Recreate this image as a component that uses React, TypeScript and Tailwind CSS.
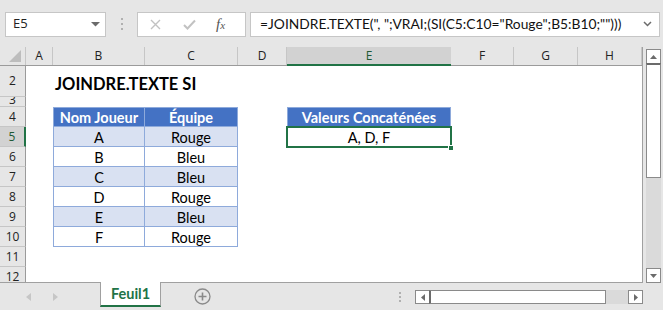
import React from "react";

const FONT_UI = { fontFamily: '"Open Sans", "Noto Sans", sans-serif' };
const FONT_CELL = { fontFamily: 'Lato, "Noto Sans", sans-serif' };

const colW = ["w-[27px]", "w-[92px]", "w-[93px]", "w-[49px]", "w-[164px]", "w-[63px]", "w-[64px]", "w-[64px]"];
const colK = ["A", "B", "C", "D", "E", "F", "G", "H"];

const data: [string, string][] = [
  ["A", "Rouge"],
  ["B", "Bleu"],
  ["C", "Bleu"],
  ["D", "Rouge"],
  ["E", "Bleu"],
  ["F", "Rouge"],
];

function RowHeader({ n, h, sel }: { n: string; h: string; sel?: boolean }) {
  return (
    <div
      className={`${h} w-[26px] shrink-0 flex items-center justify-center text-[12px] border-b border-[#c6c6c6] ${
        sel ? "bg-[#d2d2d2] border-r-2 border-r-[#217346] text-[#1e5a35]" : "bg-[#e6e6e6] border-r border-r-[#9b9b9b] text-[#222]"
      } overflow-hidden leading-none`}
      style={FONT_UI}
    >
      {n}
    </div>
  );
}

function EmptyCells({ from, to, h }: { from: number; to: number; h: string }) {
  return (
    <>
      {colW.slice(from, to).map((w, i) => (
        <div key={i} className={`${w} ${h} shrink-0 bg-white`} />
      ))}
    </>
  );
}

export default function App() {
  return (
    <div className="w-[663px] h-[310px] overflow-hidden bg-[#e6e6e6] flex flex-col select-none">
      {/* Formula bar */}
      <div className="h-[47px] shrink-0 flex items-center bg-[#e6e6e6] pt-[1px]">
        <div className="ml-[5px] w-[101px] h-[25px] bg-white border border-[#c6c6c6] flex items-center justify-between pl-[7px] pr-[5px]">
          <span className="text-[13px] text-[#222]" style={FONT_UI}>E5</span>
          <svg width="9" height="5" viewBox="0 0 9 5"><path d="M0 0 L9 0 L4.5 4.5 Z" fill="#6b6b6b" /></svg>
        </div>
        <div className="w-[31px] h-[25px] flex flex-col items-center justify-center gap-[3px]">
          <div className="w-[2px] h-[2px] bg-[#b0b0b0]" />
          <div className="w-[2px] h-[2px] bg-[#b0b0b0]" />
          <div className="w-[2px] h-[2px] bg-[#b0b0b0]" />
        </div>
        <div className="w-[109px] h-[25px] bg-white border border-[#c6c6c6] flex items-center">
          <svg className="ml-[12px]" width="11" height="11" viewBox="0 0 11 11">
            <path d="M1 1 L10 10 M10 1 L1 10" stroke="#c2c2c2" strokeWidth="1.4" />
          </svg>
          <svg className="ml-[22px]" width="13" height="11" viewBox="0 0 13 11">
            <path d="M1 6 L4.5 9.5 L12 1.5" stroke="#c2c2c2" strokeWidth="2" fill="none" />
          </svg>
          <span
            className="ml-[20px] text-[15px] italic text-[#555] leading-none"
            style={{ fontFamily: '"Liberation Serif", serif' }}
          >
            f<span className="text-[11px]">x</span>
          </span>
        </div>
        <div className="ml-[4px] w-[410px] h-[25px] bg-white border border-[#c6c6c6] flex items-center justify-between pl-[9px] pr-[7px]">
          <span className="text-[13.8px] text-[#111] whitespace-nowrap" style={FONT_CELL}>
            =JOINDRE.TEXTE(", ";VRAI;(SI(C5:C10="Rouge";B5:B10;"")))
          </span>
          <svg width="9" height="6" viewBox="0 0 9 6"><path d="M1 1 L4.5 4.5 L8 1" stroke="#6b6b6b" strokeWidth="1.5" fill="none" /></svg>
        </div>
      </div>

      {/* Grid + vertical scrollbar */}
      <div className="h-[236px] shrink-0 flex">
        <div className="w-[643px] flex flex-col border-r border-[#a0a0a0] border-b border-b-[#a0a0a0]">
          {/* column headers */}
          <div className="h-[19px] shrink-0 flex border-b border-[#9b9b9b]">
            <div className="w-[26px] h-full shrink-0 flex items-end justify-end pr-[4px] pb-[3px] border-r border-[#c6c6c6]">
              <svg width="12" height="12" viewBox="0 0 12 12"><path d="M12 0 L12 12 L0 12 Z" fill="#bdbdbd" /></svg>
            </div>
            {colK.map((k, i) => (
              <div
                key={k}
                className={`${colW[i]} shrink-0 flex items-center justify-center text-[12px] ${
                  k === "E"
                    ? "bg-[#d2d2d2] border-b-2 border-[#217346] text-[#1e5a35] -mb-[1px]"
                    : "border-r border-[#c6c6c6] text-[#222]"
                }`}
                style={FONT_UI}
              >
                {k}
              </div>
            ))}
          </div>

          {/* Row 2 */}
          <div className="h-[31px] shrink-0 flex">
            <RowHeader n="2" h="h-[31px]" />
            <div className="w-[27px] shrink-0 bg-white" />
            <div className="flex-1 bg-white flex items-center pl-[2px] pt-[5px]">
              <span className="text-[16.5px] font-bold text-black" style={FONT_CELL}>JOINDRE.TEXTE SI</span>
            </div>
          </div>

          {/* Row 3 */}
          <div className="h-[10px] shrink-0 flex">
            <div className="h-[10px] w-[26px] shrink-0 bg-[#e6e6e6] border-r border-[#9b9b9b] border-b border-b-[#c6c6c6] overflow-hidden flex justify-center">
              <span className="text-[12px] text-[#222] leading-none -mt-[3px]" style={FONT_UI}>3</span>
            </div>
            <div className="flex-1 bg-white" />
          </div>

          {/* Row 4 */}
          <div className="h-[20px] shrink-0 flex" style={FONT_CELL}>
            <RowHeader n="4" h="h-[20px]" />
            <EmptyCells from={0} to={1} h="h-[20px]" />
            <div className="w-[92px] h-[20px] shrink-0 bg-[#4472c4] border border-[#8eaadb] flex items-center justify-center pt-[2px] text-white font-bold text-[14.5px]">
              Nom Joueur
            </div>
            <div className="w-[93px] h-[20px] shrink-0 bg-[#4472c4] border border-l-0 border-[#8eaadb] flex items-center justify-center pt-[2px] text-white font-bold text-[14.5px]">
              Équipe
            </div>
            <EmptyCells from={3} to={4} h="h-[20px]" />
            <div className="w-[164px] h-[20px] shrink-0 bg-[#4472c4] border border-[#8eaadb] flex items-center justify-center pt-[2px] text-white font-bold text-[14.5px]">
              Valeurs Concaténées
            </div>
            <EmptyCells from={5} to={8} h="h-[20px]" />
          </div>

          {/* Rows 5-10 */}
          {data.map(([n, t], i) => {
            const band = i % 2 === 0 ? "bg-[#d9e1f2]" : "bg-white";
            return (
              <div key={n} className="h-[20px] shrink-0 flex" style={FONT_CELL}>
                <RowHeader n={String(i + 5)} h="h-[20px]" sel={i === 0} />
                <EmptyCells from={0} to={1} h="h-[20px]" />
                <div className={`w-[92px] h-[20px] shrink-0 ${band} border-l border-r border-b border-[#8eaadb] flex items-center justify-center pt-[2px] text-black text-[14.5px]`}>
                  {n}
                </div>
                <div className={`w-[93px] h-[20px] shrink-0 ${band} border-r border-b border-[#8eaadb] flex items-center justify-center pt-[2px] text-black text-[14.5px]`}>
                  {t}
                </div>
                <EmptyCells from={3} to={4} h="h-[20px]" />
                {i === 0 ? (
                  <div className="w-[164px] h-[20px] shrink-0 bg-white relative flex items-center justify-center pt-[2px] text-black text-[14.5px]">
                    A, D, F
                    <div className="absolute -left-[1px] -top-[1px] w-[166px] h-[22px] border-2 border-[#217346]" />
                    <div className="absolute -right-[3px] -bottom-[4px] w-[6px] h-[6px] bg-[#217346] border border-white" />
                  </div>
                ) : (
                  <EmptyCells from={4} to={5} h="h-[20px]" />
                )}
                <EmptyCells from={5} to={8} h="h-[20px]" />
              </div>
            );
          })}

          {/* Row 11 */}
          <div className="h-[20px] shrink-0 flex">
            <RowHeader n="11" h="h-[20px]" />
            <div className="flex-1 bg-white" />
          </div>
          {/* Row 12 */}
          <div className="flex-1 flex overflow-hidden">
            <div className="w-[26px] shrink-0 bg-[#e6e6e6] border-r border-[#9b9b9b] flex justify-center pt-[4px] text-[12px] text-[#222] leading-none" style={FONT_UI}>
              12
            </div>
            <div className="flex-1 bg-white" />
          </div>
        </div>

        {/* Vertical scrollbar */}
        <div className="w-[20px] flex flex-col pl-[3px] pr-[2px] pt-[2px]">
          <div className="h-[15px] w-[15px] bg-white border border-[#8a8a8a] flex items-center justify-center">
            <svg width="7" height="4" viewBox="0 0 7 4"><path d="M0 4 L3.5 0 L7 4 Z" fill="#6b6b6b" /></svg>
          </div>
          <div className="h-[115px] w-[15px] bg-white border border-[#8a8a8a] border-t-2 border-t-[#6b6b6b] -mt-[1px]" />
          <div className="flex-1 w-[15px] bg-[#dadada]" />
          <div className="h-[15px] w-[15px] bg-white border border-[#8a8a8a] flex items-center justify-center">
            <svg width="7" height="4" viewBox="0 0 7 4"><path d="M0 0 L7 0 L3.5 4 Z" fill="#6b6b6b" /></svg>
          </div>
        </div>
      </div>

      {/* Sheet tabs bar */}
      <div className="flex-1 flex items-start bg-[#e6e6e6]">
        <div className="w-[100px] h-[27px] flex items-center pl-[26px] gap-[22px]">
          <svg width="5" height="8" viewBox="0 0 5 8"><path d="M5 0 L5 8 L0 4 Z" fill="#c6c6c6" /></svg>
          <svg width="5" height="8" viewBox="0 0 5 8"><path d="M0 0 L0 8 L5 4 Z" fill="#c6c6c6" /></svg>
        </div>
        <div className="w-[61px] h-[25px] bg-white border-l border-r border-[#a0a0a0] border-b-2 border-b-[#217346] -mt-[1px] flex items-center justify-center">
          <span className="text-[14.5px] font-bold text-[#217346]" style={FONT_CELL}>Feuil1</span>
        </div>
        <div className="w-[85px] h-[27px] flex items-center justify-center pr-[2px]">
          <svg width="17" height="17" viewBox="0 0 17 17">
            <circle cx="8.5" cy="8.5" r="7.5" stroke="#8a8a8a" strokeWidth="1.3" fill="none" />
            <path d="M8.5 4.5 V12.5 M4.5 8.5 H12.5" stroke="#8a8a8a" strokeWidth="1.6" />
          </svg>
        </div>
        <div className="w-[169px] h-[27px] flex items-center justify-end pr-[14px]">
          <div className="flex flex-col gap-[2px]">
            <div className="w-[2px] h-[2px] bg-[#b0b0b0]" />
            <div className="w-[2px] h-[2px] bg-[#b0b0b0]" />
            <div className="w-[2px] h-[2px] bg-[#b0b0b0]" />
          </div>
        </div>
        <div className="mt-[7px] w-[228px] h-[14px] flex">
          <div className="w-[15px] h-[14px] bg-white border border-[#8a8a8a] flex items-center justify-center">
            <svg width="4" height="7" viewBox="0 0 4 7"><path d="M4 0 L4 7 L0 3.5 Z" fill="#6b6b6b" /></svg>
          </div>
          <div className="w-[177px] h-[14px] bg-white border border-[#8a8a8a] border-l-2 border-l-[#6b6b6b] -ml-[1px]" />
          <div className="flex-1 h-[14px] bg-[#dadada]" />
          <div className="w-[15px] h-[14px] bg-white border border-[#8a8a8a] flex items-center justify-center">
            <svg width="4" height="7" viewBox="0 0 4 7"><path d="M0 0 L0 7 L4 3.5 Z" fill="#6b6b6b" /></svg>
          </div>
        </div>
      </div>
    </div>
  );
}
